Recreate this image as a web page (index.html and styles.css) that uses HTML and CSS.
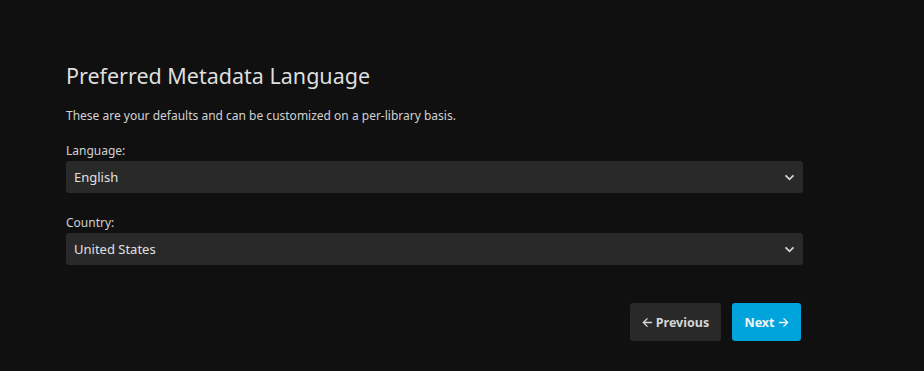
FILE: index.html
```html
<!DOCTYPE html>
<html lang="en">
<head>
    <meta charset="UTF-8">
    <meta name="viewport" content="width=device-width, initial-scale=1.0">
    <title>Preferred Metadata Language</title>
    <link rel="stylesheet" href="styles.css">
</head>
<body>
    <section class="wizard">
        <h1 class="titulo">Preferred Metadata Language</h1>
        <p class="descricao">These are your defaults and can be customized on a per-library basis.</p>

        <div class="campo">
            <label class="rotulo">Language:</label>
            <div class="seletor">
                <span>English</span>
                <svg class="seta" viewBox="0 0 12 8" width="11" height="7"><path d="M1.5 1.5 L6 6 L10.5 1.5" /></svg>
            </div>
        </div>

        <div class="campo">
            <label class="rotulo">Country:</label>
            <div class="seletor">
                <span>United States</span>
                <svg class="seta" viewBox="0 0 12 8" width="11" height="7"><path d="M1.5 1.5 L6 6 L10.5 1.5" /></svg>
            </div>
        </div>

        <div class="botoes">
            <button class="btn btn_voltar">
                <svg class="icone" viewBox="0 0 12 12" width="11" height="11"><path d="M11 6 H1.5 M6 1.5 L1.5 6 L6 10.5" /></svg>
                Previous
            </button>
            <button class="btn btn_proximo">
                Next
                <svg class="icone" viewBox="0 0 12 12" width="11" height="11"><path d="M1 6 H10.5 M6 1.5 L10.5 6 L6 10.5" /></svg>
            </button>
        </div>
    </section>
</body>
</html>
```

FILE: styles.css
```css
*{
    margin: 0;
    padding: 0;
    box-sizing: border-box;
}
body{
    background-color: #101010;
    font-family: "Noto Sans", sans-serif;
    color: rgba(255, 255, 255, 0.82);
}
.wizard{
    width: 737px;
    margin-left: 66px;
    padding-top: 61px;
}
.titulo{
    font-size: 21.5px;
    font-weight: 400;
    line-height: 30px;
    color: #dedede;
}
.descricao{
    font-size: 12px;
    line-height: 18px;
    margin-top: 16px;
}
.campo{
    margin-top: 17px;
}
.campo + .campo{
    margin-top: 21px;
}
.rotulo{
    display: block;
    font-size: 12px;
    line-height: 18px;
    margin-bottom: 1px;
}
.seletor{
    height: 32px;
    background-color: #292929;
    border-radius: 3px;
    display: flex;
    align-items: center;
    justify-content: space-between;
    padding: 0 8px;
    font-size: 13px;
    color: #e0e0e0;
}
.seta{
    fill: none;
    stroke: #d6d6d6;
    stroke-width: 2;
}
.botoes{
    display: flex;
    justify-content: flex-end;
    gap: 11px;
    margin-top: 38px;
    padding-right: 2px;
}
.btn{
    height: 38px;
    border: none;
    border-radius: 3px;
    font-family: "Noto Sans", sans-serif;
    font-size: 12.5px;
    font-weight: 700;
    display: flex;
    align-items: center;
    justify-content: center;
    gap: 3px;
}
.btn_voltar{
    width: 91px;
    background-color: #292929;
    color: #d6d6d6;
}
.btn_proximo{
    width: 69px;
    background-color: #00a4dc;
    color: #f4f4f4;
}
.icone{
    fill: none;
    stroke: currentColor;
    stroke-width: 1.5;
}
```
